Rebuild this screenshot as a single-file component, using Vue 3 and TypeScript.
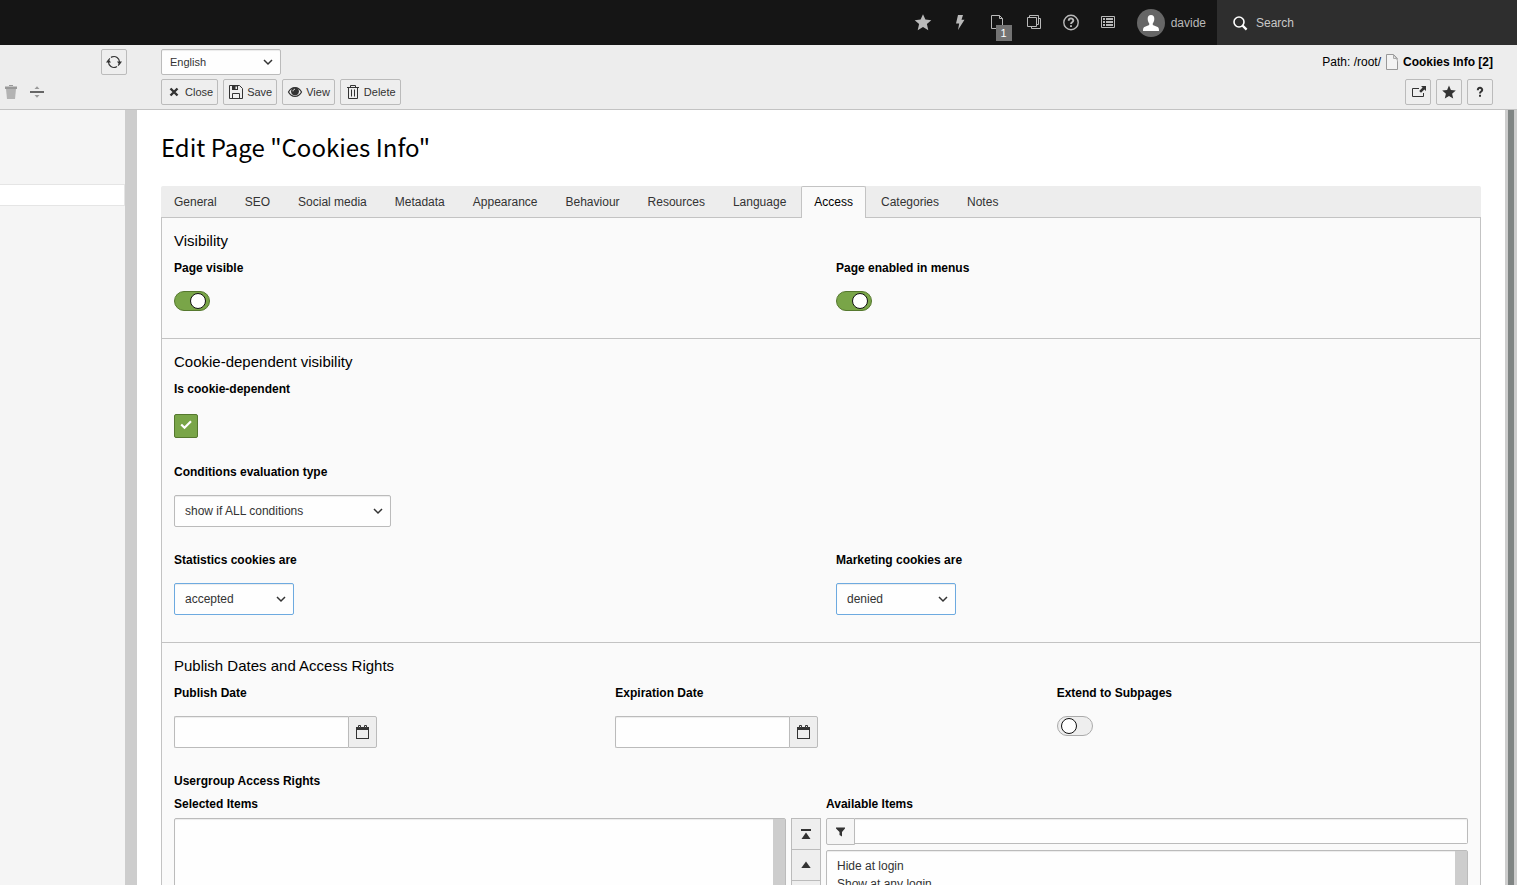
<script setup lang="ts">
import { ref } from 'vue'

const tabs: string[] = [
  'General', 'SEO', 'Social media', 'Metadata', 'Appearance', 'Behaviour',
  'Resources', 'Language', 'Access', 'Categories', 'Notes',
]
const activeTab = ref('Access')

const language = ref('English')
const pageVisible = ref(true)
const inMenus = ref(true)
const cookieDependent = ref(true)
const evaluation = ref('show if ALL conditions')
const statistics = ref('accepted')
const marketing = ref('denied')
const publishDate = ref('')
const expirationDate = ref('')
const extendToSubpages = ref(false)
const filterText = ref('')
const selectedItems = ref<string[]>([])
const availableItems: string[] = ['Hide at login', 'Show at any login']
</script>

<template>
  <div class="app">
    <header class="topbar">
      <nav class="tools" aria-label="Toolbar">
        <button type="button" aria-label="Bookmarks">
          <svg width="16" height="16" viewBox="0 0 16 16"><path fill="#b9b9b9" d="M8 -.7l2.400 5.300 5.900.600-4.400 3.900 1.400 6.200L8 12l-5.300 3.300 1.400-6.200L-.300 5.200l5.900-.600z" /></svg>
        </button>
        <button type="button" aria-label="Clear cache">
          <svg width="16" height="16" viewBox="0 0 16 16"><path fill="#b9b9b9" d="M6 0h5L9.500 4.800H12.500L6 15l1.200-6.500H4z" /></svg>
        </button>
        <button type="button" class="badged" aria-label="Open documents">
          <svg width="16" height="16" viewBox="0 0 16 16"><path fill="none" stroke="#b9b9b9" d="M2.500.500h8l3 3v10h-11zM10.500.500v3h3" /></svg>
          <span class="badge">1</span>
        </button>
        <button type="button" aria-label="Workspaces">
          <svg width="16" height="16" viewBox="0 0 16 16"><path fill="none" stroke="#b9b9b9" d="M1.500 2.500h9v9h-9zM3.500 2.500v-2h9v9h-2M12.500 3.500h2v10h-9v-2" /></svg>
        </button>
        <button type="button" aria-label="Help">
          <svg width="16" height="16" viewBox="0 0 16 16"><circle cx="8" cy="7.500" r="7.200" fill="none" stroke="#b9b9b9" stroke-width="1.400" /><path fill="none" stroke="#b9b9b9" stroke-width="1.900" d="M5.700 5.800C5.700 2.500 10.300 2.700 10.300 5.500c0 1.700-2.300 1.800-2.300 3.600M8 10.200v1.900" /></svg>
        </button>
        <button type="button" aria-label="System information">
          <svg width="16" height="16" viewBox="0 0 16 16"><path fill="none" stroke="#b9b9b9" d="M1.500 1.500h13v11h-13z" /><path fill="#b9b9b9" d="M3 3h2v2H3zM6 3h7v2H6zM3 6h2v2H3zM6 6h7v2H6zM3 9h2v2H3zM6 9h7v2H6z" /></svg>
        </button>
      </nav>
      <button type="button" class="user">
        <span class="avatar">
          <svg width="16" height="16" viewBox="0 0 16 16"><path fill="#fff" d="M8 0c2.200 0 3.400 1.500 3.300 3.700 0 2-.6 3.400-1.500 4.600v1.800l4.800 2c1 .5 1.400 1.500 1.400 3.900H0c0-2.400.4-3.400 1.400-3.900l4.800-2V8.300C5.300 7.100 4.700 5.700 4.700 3.700 4.600 1.500 5.800 0 8 0z" /></svg>
        </span>
        <span>davide</span>
      </button>
      <label class="search">
        <svg width="16" height="16" viewBox="0 0 16 16"><circle cx="7" cy="7" r="5" fill="none" stroke="#fff" stroke-width="1.600" /><path stroke="#fff" stroke-width="2.200" d="M10.600 10.600l4 4" /></svg>
        <input type="text" placeholder="Search" aria-label="Search">
      </label>
    </header>

    <div class="docheader">
      <div class="tree-head">
        <div class="bar end">
          <button type="button" class="btn square" aria-label="Refresh">
            <svg width="16" height="16" viewBox="0 0 16 16"><path fill="none" stroke="#333" stroke-width="1.200" d="M6 2.900A5.500 5.500 0 0 1 13.500 8M10 13.100A5.500 5.500 0 0 1 2.500 8" /><path fill="none" stroke="#333" stroke-width="1.200" stroke-dasharray="1.500 1.500" d="M3 5.700A5.500 5.500 0 0 1 6 2.900M13 10.300a5.500 5.500 0 0 1-3 2.800" /><path fill="#333" d="M0 8.500L2.500 5 5 8.500zM11 7.500h5L13.500 11z" /></svg>
          </button>
        </div>
        <div class="bar tree-tools">
          <button type="button" class="plain" aria-label="Delete">
            <svg width="16" height="16" viewBox="0 0 16 16"><path fill="#999" d="M6 1h4v1H6zM2 2.500h12V5H2z" /><path fill="#b3b3b3" d="M3 5h10l-1 10H4z" /></svg>
          </button>
          <button type="button" class="plain" aria-label="Divider">
            <svg width="16" height="16" viewBox="0 0 16 16"><path fill="#666" d="M1 7h14v2H1z" /><path fill="#999" d="M5.500 5L8 2.200 10.500 5zM5.500 11h5L8 13.800z" /></svg>
          </button>
        </div>
      </div>
      <div class="module-head">
        <div class="bar between">
          <div class="select small">
            <select v-model="language" aria-label="Language">
              <option>English</option>
            </select>
            <svg width="10" height="6" viewBox="0 0 10 6"><path d="M1 1l4 4 4-4" /></svg>
          </div>
          <div class="path">
            <span>Path: /root/</span>
            <svg width="12" height="16" viewBox="0 0 12 16"><path fill="#f3f3f3" stroke="#999" d="M.5.500h7l4 4v11H.5z" /><path fill="#bbb" d="M7 1l5 4v3z" /><path fill="none" stroke="#aaa" d="M7.500.500v4h4" /></svg>
            <strong>Cookies Info [2]</strong>
          </div>
        </div>
        <div class="bar between">
          <div class="btns">
            <button type="button" class="btn">
              <svg width="16" height="16" viewBox="0 0 16 16"><path stroke="#333" stroke-width="2.400" d="M4.500 4.500l7 7M11.500 4.500l-7 7" /></svg>Close
            </button>
            <button type="button" class="btn">
              <svg width="16" height="16" viewBox="0 0 16 16"><path fill="none" stroke="#333" d="M1.500 1.500h10l3 3v10h-13zM4.500 14V9.500h7V14" /><path fill="#333" d="M4 2h6v4H4z" /><path fill="#ededed" d="M7.500 2.500H9V5H7.500z" /></svg>Save
            </button>
            <button type="button" class="btn">
              <svg width="16" height="16" viewBox="0 0 16 16"><path fill="none" stroke="#333" stroke-width="1.200" d="M1.500 8C3 5 5.500 3.600 8 3.600S13 5 14.500 8C13 11 10.500 12.400 8 12.400S3 11 1.500 8z" /><circle cx="8" cy="7.300" r="3.900" fill="#333" /><path fill="none" stroke="#ededed" d="M6 7.300C6 6 7 5.300 8 5.300" /></svg>View
            </button>
            <button type="button" class="btn">
              <svg width="16" height="16" viewBox="0 0 16 16"><path fill="none" stroke="#333" d="M2 3.500h12M5.500 3.500v-2h5v2M3.500 4v10.500h9V4M6.500 5.500v7M9.500 5.500v7" /></svg>Delete
            </button>
          </div>
          <div class="btns">
            <button type="button" class="btn square" aria-label="Open in new window">
              <svg width="16" height="16" viewBox="0 0 16 16"><path fill="none" stroke="#333" d="M9 4.500H2.500v8h11V9" /><path fill="#333" d="M11 2h5v5l-1.600-1.600L11 8.800 9.200 7l3.400-3.400z" /></svg>
            </button>
            <button type="button" class="btn square" aria-label="Bookmark">
              <svg width="16" height="16" viewBox="0 0 16 16"><path fill="#333" d="M8 1.500l1.900 4.600 4.900.4-3.700 3.200 1.100 4.800L8 11.900l-4.200 2.600 1.100-4.800L1.200 6.500l4.900-.4z" /></svg>
            </button>
            <button type="button" class="btn square" aria-label="Help">
              <svg width="16" height="16" viewBox="0 0 16 16"><path fill="none" stroke="#333" stroke-width="2" d="M5.800 6.300C5.800 3 10.300 3.200 10.200 6 10.200 7.600 8 7.600 8 9.500M8 10.800v2" /></svg>
            </button>
          </div>
        </div>
      </div>
    </div>

    <div class="body">
      <aside class="tree"><div class="tree-row" /></aside>
      <div class="splitter" />
      <main class="content">
        <h1>Edit Page "Cookies Info"</h1>
        <div class="tabs" role="tablist">
          <button
            v-for="tab in tabs" :key="tab" type="button" role="tab"
            :aria-selected="tab === activeTab" :class="{ active: tab === activeTab }"
            @click="activeTab = tab"
          >{{ tab }}</button>
        </div>

        <form class="panel" @submit.prevent>
          <section>
            <h2>Visibility</h2>
            <div class="grid two">
              <div class="field">
                <label for="visible">Page visible</label>
                <input id="visible" v-model="pageVisible" type="checkbox" class="toggle">
              </div>
              <div class="field">
                <label for="menus">Page enabled in menus</label>
                <input id="menus" v-model="inMenus" type="checkbox" class="toggle">
              </div>
            </div>
          </section>

          <section>
            <h2>Cookie-dependent visibility</h2>
            <div class="field">
              <label for="dependent">Is cookie-dependent</label>
              <div class="tick">
                <input id="dependent" v-model="cookieDependent" type="checkbox">
                <svg v-if="cookieDependent" width="12" height="10" viewBox="0 0 12 10"><path fill="none" stroke="#fff" stroke-width="2.200" d="M1.200 4.500l3.300 3.300 6.500-6.500" /></svg>
              </div>
            </div>
            <div class="field">
              <label for="evaluation">Conditions evaluation type</label>
              <div class="select wide">
                <select id="evaluation" v-model="evaluation">
                  <option>show if ALL conditions</option>
                </select>
                <svg width="10" height="6" viewBox="0 0 10 6"><path d="M1 1l4 4 4-4" /></svg>
              </div>
            </div>
            <div class="grid two">
              <div class="field">
                <label for="statistics">Statistics cookies are</label>
                <div class="select changed">
                  <select id="statistics" v-model="statistics">
                    <option>accepted</option>
                    <option>denied</option>
                  </select>
                  <svg width="10" height="6" viewBox="0 0 10 6"><path d="M1 1l4 4 4-4" /></svg>
                </div>
              </div>
              <div class="field">
                <label for="marketing">Marketing cookies are</label>
                <div class="select changed">
                  <select id="marketing" v-model="marketing">
                    <option>accepted</option>
                    <option>denied</option>
                  </select>
                  <svg width="10" height="6" viewBox="0 0 10 6"><path d="M1 1l4 4 4-4" /></svg>
                </div>
              </div>
            </div>
          </section>

          <section>
            <h2>Publish Dates and Access Rights</h2>
            <div class="grid three">
              <div class="field">
                <label for="publish">Publish Date</label>
                <div class="date">
                  <input id="publish" v-model="publishDate" type="text">
                  <button type="button" aria-label="Choose publish date">
                    <svg width="15" height="16" viewBox="0 0 15 16"><path fill="#333" d="M1 3h13v12H1zm1 3v8h11V6z" fill-rule="evenodd" /><path fill="#eee" stroke="#333" d="M3.500 1.500h2v2h-2zM9.500 1.500h2v2h-2z" /></svg>
                  </button>
                </div>
              </div>
              <div class="field">
                <label for="expiration">Expiration Date</label>
                <div class="date">
                  <input id="expiration" v-model="expirationDate" type="text">
                  <button type="button" aria-label="Choose expiration date">
                    <svg width="15" height="16" viewBox="0 0 15 16"><path fill="#333" d="M1 3h13v12H1zm1 3v8h11V6z" fill-rule="evenodd" /><path fill="#eee" stroke="#333" d="M3.500 1.500h2v2h-2zM9.500 1.500h2v2h-2z" /></svg>
                  </button>
                </div>
              </div>
              <div class="field">
                <label for="extend">Extend to Subpages</label>
                <input id="extend" v-model="extendToSubpages" type="checkbox" class="toggle">
              </div>
            </div>

            <h3>Usergroup Access Rights</h3>
            <div class="transfer">
              <div class="pane">
                <label for="selected">Selected Items</label>
                <div class="lists">
                  <div class="listbox">
                    <select id="selected" multiple />
                    <span class="track" />
                  </div>
                  <div class="movers">
                    <button type="button" aria-label="Move to top">
                      <svg width="16" height="16" viewBox="0 0 16 16"><path fill="#333" d="M3 3h10v2H3zM3.500 13L8 6.500l4.500 6.500z" /></svg>
                    </button>
                    <button type="button" aria-label="Move up">
                      <svg width="16" height="16" viewBox="0 0 16 16"><path fill="#333" d="M3.300 11L8 4.500l4.700 6.500z" /></svg>
                    </button>
                    <button type="button" aria-label="Move down">
                      <svg width="16" height="16" viewBox="0 0 16 16"><path fill="#333" d="M3.500 5h9L8 11z" /></svg>
                    </button>
                  </div>
                </div>
              </div>
              <div class="pane">
                <label for="available">Available Items</label>
                <div class="filter">
                  <span>
                    <svg width="16" height="16" viewBox="0 0 16 16"><path fill="#333" d="M3 3.500h9v1L9 8V12.500L6.500 11V8L3 4.500z" /></svg>
                  </span>
                  <input v-model="filterText" type="text" aria-label="Filter available items">
                </div>
                <div class="listbox">
                  <select id="available" v-model="selectedItems" multiple>
                    <option v-for="item in availableItems" :key="item">{{ item }}</option>
                  </select>
                  <span class="track" />
                </div>
              </div>
            </div>
          </section>
        </form>
      </main>
      <div class="scrollbar"><span /></div>
    </div>
  </div>
</template>

<style>
body {
  margin: 0;
}
</style>

<style scoped>
* {
  box-sizing: border-box;
}
.app {
  height: 100vh;
  display: flex;
  flex-direction: column;
  overflow: hidden;
  background: #fff;
  color: #000;
  font: 12px/18px "Liberation Sans", Arial, sans-serif;
}
button,
input,
select {
  font: inherit;
  color: #333;
  margin: 0;
}
button {
  cursor: pointer;
}
svg {
  display: block;
  flex: none;
  overflow: visible;
}

/* Top bar */
.topbar {
  flex: none;
  height: 45px;
  display: flex;
  justify-content: flex-end;
  background: #151515;
}
.tools {
  display: flex;
}
.tools button {
  position: relative;
  width: 37px;
  display: flex;
  align-items: center;
  justify-content: center;
  padding: 0;
  border: 0;
  background: none;
}
.badge {
  position: absolute;
  top: 25px;
  left: 17px;
  width: 16px;
  height: 16px;
  background: #737373;
  color: #fff;
  font-size: 11px;
  line-height: 17px;
  text-align: center;
}
.user {
  display: flex;
  align-items: center;
  gap: 6px;
  padding: 0 11px 0 10px;
  border: 0;
  background: none;
  color: #b9b9b9;
}
.avatar {
  width: 28px;
  height: 28px;
  display: flex;
  align-items: center;
  justify-content: center;
  border-radius: 50%;
  background: #666;
}
.search {
  width: 300px;
  display: flex;
  align-items: center;
  gap: 8px;
  padding: 0 15px;
  background: #2e2e2e;
}
.search input {
  flex: 1;
  min-width: 0;
  padding: 0;
  border: 0;
  outline: 0;
  background: none;
  color: #fff;
}
.search input::placeholder {
  color: #c8c8c8;
  opacity: 1;
}

/* Document header */
.docheader {
  flex: none;
  display: flex;
  background: #ededed;
  border-bottom: 1px solid #c3c3c3;
}
.tree-head,
.module-head {
  display: flex;
  flex-direction: column;
  gap: 4px;
  padding: 4px 0;
}
.tree-head {
  width: 137px;
  padding-right: 10px;
}
.module-head {
  flex: 1;
  padding-left: 24px;
  padding-right: 24px;
}
.bar {
  height: 26px;
  display: flex;
  align-items: center;
}
.end {
  justify-content: flex-end;
}
.between {
  justify-content: space-between;
}
.tree-tools {
  gap: 10px;
  padding-left: 3px;
}
.plain {
  padding: 0;
  border: 0;
  background: none;
}
.path {
  display: flex;
  align-items: center;
  gap: 5px;
}
.btns {
  display: flex;
  gap: 5px;
}
.btn {
  height: 26px;
  display: flex;
  align-items: center;
  gap: 3px;
  padding: 0 4px;
  border: 1px solid #bbb;
  border-radius: 2px;
  background: #eee;
  font-size: 11px;
}

/* Drop-downs */
.select {
  position: relative;
  width: 120px;
}
.select select {
  appearance: none;
  display: block;
  width: 100%;
  height: 32px;
  padding: 0 32px 0 10px;
  border: 1px solid #bbb;
  border-radius: 2px;
  background: #fefefe;
  box-shadow: inset 0 1px 1px rgba(0, 0, 0, 0.075);
}
.select svg {
  position: absolute;
  right: 8px;
  top: 50%;
  margin-top: -3px;
  fill: none;
  stroke: #333;
  stroke-width: 1.5;
  pointer-events: none;
}
.select.small select {
  height: 26px;
  padding-left: 8px;
  font-size: 11px;
}
.select.wide {
  width: 217px;
}
.select.changed select {
  border-color: #6daae0;
}

/* Page body */
.body {
  flex: 1;
  min-height: 0;
  display: flex;
}
.tree {
  width: 125px;
  padding-top: 74px;
  background: #f5f5f5;
}
.tree-row {
  height: 22px;
  border: 1px solid #e5e5e5;
  border-left: 0;
  background: #fff;
}
.splitter {
  width: 12px;
  background: #cdcdcd;
}
.content {
  flex: 1;
  min-width: 0;
  padding: 18px 24px 0;
  overflow: hidden;
}
.scrollbar {
  width: 12px;
  display: flex;
  padding: 0 3px;
  background: #cdcdcd;
}
.scrollbar span {
  flex: 1;
  background: #808584;
}
h1 {
  margin: 0 0 20px;
  font: 400 24px/38px "Noto Sans CJK SC", sans-serif;
}
h2 {
  margin: 0 0 8px;
  font-size: 15px;
  font-weight: 400;
  line-height: 20px;
}
h3 {
  margin: 0 0 5px;
  font-size: 12px;
  line-height: 18px;
}
.tabs {
  display: flex;
  gap: 2px;
  background: #ededed;
  border-radius: 2px 2px 0 0;
}
.tabs button {
  height: 32px;
  padding: 0 12px 1px;
  border: 1px solid transparent;
  border-bottom: 0;
  border-radius: 2px 2px 0 0;
  background: none;
}
.tabs button.active {
  position: relative;
  border-color: #c3c3c3;
  background: #fafafa;
  color: #000;
}
.panel {
  margin-top: -1px;
  border: 1px solid #c3c3c3;
  background: #fafafa;
}
section {
  padding: 13px 12px 3px;
}
section + section {
  border-top: 1px solid #c3c3c3;
}
.grid {
  display: grid;
  column-gap: 30px;
}
.two {
  grid-template-columns: repeat(2, 1fr);
}
.three {
  grid-template-columns: repeat(3, 1fr);
}
.field {
  display: flex;
  flex-direction: column;
  align-items: flex-start;
  gap: 14px;
  margin-bottom: 24px;
}
label {
  font-weight: 700;
}
.search {
  font-weight: 400;
}

/* Switches and tick box */
.toggle {
  appearance: none;
  width: 36px;
  height: 20px;
  display: flex;
  align-items: center;
  padding: 0 3px;
  border: 1px solid #aaa;
  border-radius: 10px;
  background: #eee;
}
.toggle::before {
  content: "";
  width: 14px;
  height: 14px;
  border: 1px solid #111;
  border-radius: 50%;
  background: #fff;
}
.toggle:checked {
  justify-content: flex-end;
  border-color: #55782e;
  background: #79a548;
}
.tick {
  position: relative;
  padding: 2px 0 1px;
}
.tick input {
  appearance: none;
  display: block;
  width: 24px;
  height: 24px;
  border: 1px solid #bbb;
  border-radius: 2px;
  background: #fefefe;
}
.tick input:checked {
  border-color: #55782e;
  background: #79a548;
}
.tick svg {
  position: absolute;
  left: 6px;
  top: 8px;
  pointer-events: none;
}

/* Dates and lists */
.date {
  display: flex;
}
.date input {
  width: 174px;
  height: 32px;
  padding: 0 8px;
  border: 1px solid #bbb;
  border-right: 0;
  border-radius: 2px 0 0 2px;
  background: #fefefe;
  box-shadow: inset 0 1px 1px rgba(0, 0, 0, 0.075);
}
.date button {
  width: 29px;
  height: 32px;
  padding: 0;
  display: flex;
  align-items: center;
  justify-content: center;
  border: 1px solid #bbb;
  border-radius: 0 2px 2px 0;
  background: #eee;
}
.transfer {
  display: grid;
  grid-template-columns: repeat(2, 1fr);
}
.pane {
  display: flex;
  flex-direction: column;
  gap: 5px;
}
.pane + .pane {
  padding-left: 5px;
}
.lists {
  display: flex;
  gap: 5px;
}
.listbox {
  flex: 1;
  height: 160px;
  display: flex;
  border: 1px solid #bbb;
  border-radius: 2px;
  background: #fefefe;
  box-shadow: inset 0 1px 1px rgba(0, 0, 0, 0.075);
}
.pane > .listbox {
  flex: none;
}
.listbox select {
  flex: 1;
  min-width: 0;
  height: 100%;
  padding: 8px 10px;
  border: 0;
  outline: 0;
  background: none;
  overflow: hidden;
}
.listbox option {
  min-height: 18px;
  padding: 0;
  line-height: 18px;
}
.track {
  width: 12px;
  background: #cdcdcd;
}
.movers {
  width: 30px;
}
.movers button {
  width: 100%;
  height: 32px;
  display: flex;
  align-items: center;
  justify-content: center;
  padding: 0;
  border: 1px solid #bbb;
  background: #eee;
}
.movers button + button {
  margin-top: -1px;
}
.filter {
  display: flex;
}
.filter span {
  width: 29px;
  height: 27px;
  display: flex;
  align-items: center;
  justify-content: center;
  border: 1px solid #bbb;
  border-radius: 2px 0 0 2px;
  background: #f5f5f5;
}
.filter input {
  flex: 1;
  min-width: 0;
  height: 26px;
  padding: 0 8px;
  border: 1px solid #bbb;
  border-left: 0;
  border-radius: 0 2px 2px 0;
  background: #fefefe;
  box-shadow: inset 0 1px 1px rgba(0, 0, 0, 0.075);
}
</style>
